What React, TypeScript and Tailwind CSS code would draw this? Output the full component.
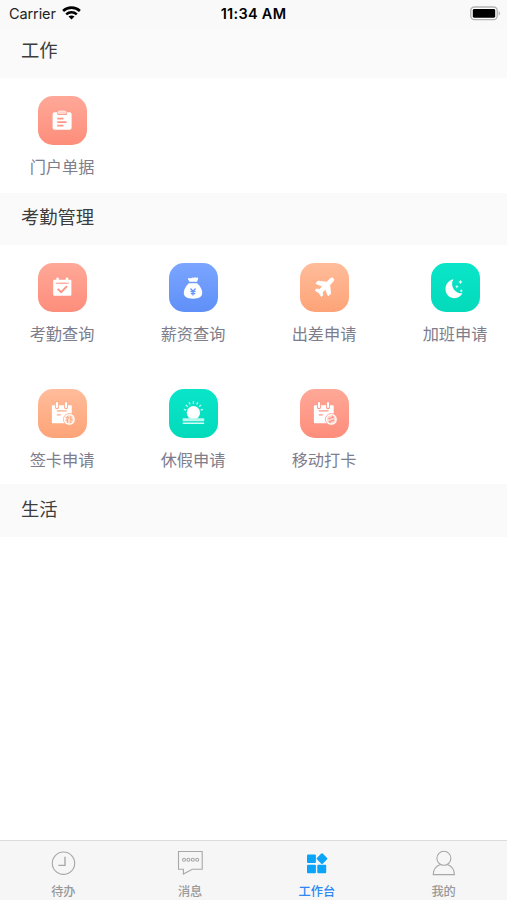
import type { ReactNode } from "react";

interface MenuItem {
  label: string;
  tile: string;
  icon: ReactNode;
}

interface Section {
  title: string;
  height: string;
  header: string;
  items: MenuItem[];
}

const coral = "from-[#ffa898] to-[#fd8d7b]";
const orange = "from-[#ffbc9a] to-[#fda378]";
const blue = "from-[#7ba5ff] to-[#5f8ff8]";
const green = "from-[#0ae5c9] to-[#03dabb]";

function ClipboardIcon() {
  return (
    <>
      <path
        fill="#fff"
        d="M16.6 16.2h2.6v1.7c0 .7.5 1.1 1.1 1.1h7.6c.6 0 1.1-.4 1.1-1.1v-1.7h2.6c1.1 0 2 .9 2 2v13.6c0 1.1-.9 2-2 2h-15c-1.1 0-2-.9-2-2V18.2c0-1.1.9-2 2-2z"
      />
      <path
        d="M20.3 17.2v-1.1c0-.6.4-1 1-1h5.6c.6 0 1 .4 1 1v1.1z"
        fill="#ffc4b8"
        stroke="#fff"
        strokeWidth="0.8"
      />
      <path
        d="M19.3 22.6h6.2M19.3 26.1h9.2M19.3 29.6h6.2"
        stroke="#fe9685"
        strokeWidth="1.8"
      />
    </>
  );
}

function CalendarCheckIcon() {
  return (
    <>
      <rect x="15.2" y="16.8" width="18.2" height="16" rx="1.2" fill="#fff" />
      <path d="M17.8 20.2h13" stroke="#fe9b8a" strokeWidth="1.2" />
      <path
        d="M19.6 15.8v2.6M29 15.8v2.6"
        stroke="#fff"
        strokeWidth="2.6"
        strokeLinecap="round"
      />
      <path
        d="M19.7 25.9l3.5 3.3 5.8-6"
        fill="none"
        stroke="#fe9483"
        strokeWidth="1.9"
      />
    </>
  );
}

function MoneyBagIcon() {
  return (
    <>
      <path
        fill="#fff"
        d="M20.4 18.8l-1.3-2.6c-.3-.8.3-1.4 1-1.2l1.9.5c.6-1 1.6-1.500 2.500-.5.9-1 2-1.100 2.700-.1.800-.800 2.300-.4 1.900.8L28 18.800z"
      />
      <path
        fill="#fff"
        d="M19.8 20.200h8.400c3.100 3 5 6.200 5 9.600 0 4.300-3.400 5.900-9.200 5.900s-9.200-1.600-9.200-5.900c0-3.400 1.900-6.600 5-9.600z"
      />
      <path
        d="M21.500 25.500l2.500 3 2.500-3M24 28.300v4.300M21.500 28.700h5M21.800 30.600h4.400"
        fill="none"
        stroke="#6794fa"
        strokeWidth="1.3"
      />
    </>
  );
}

function PlaneIcon() {
  return (
    <path
      fill="#fff"
      stroke="#fff"
      strokeWidth="0.900"
      strokeLinejoin="round"
      d="M33.200 15.500c.9.900.5 2.200-.5 3.300l-3 3.100.9 8.800-1.700 1.700c-.5.4-1 .2-1.200-.3l-2.200-6-3.100 3.100.3 3-1.300 1.300-2.400-3.700-3.800-2.400 1.300-1.300 3.100.3 3-3.100-6-2.400c-.5-.2-.6-.8-.2-1.200l1.600-1.500 8.700 1 3.200-3.200c1.100-1 2.400-1.400 3.300-.5z"
    />
  );
}

function MoonIcon() {
  return (
    <>
      <path
        fill="#fff"
        d="M22.400 16.200c-2 3.200-1.700 7.400.7 10.500 2.100 2.700 5.300 3.900 8.400 3.600-1.700 3-4.400 4.900-7.800 4.900-5.200 0-9.200-4-9.200-9.300 0-4.700 3.300-8.700 7.900-9.700z"
      />
      <path
        fill="#d8fff8"
        d="M29.500 16.800l.7 1.500 1.500.7-1.500.7-.7 1.500-.7-1.500-1.500-.7 1.500-.7zM25.900 21.900l.6 1.200 1.200.6-1.200.6-.6 1.200-.6-1.200-1.200-.6 1.200-.6zM30.300 26.200l.6 1.100 1.100.6-1.100.6-.6 1.100-.6-1.100-1.100-.6 1.100-.6z"
      />
    </>
  );
}

function CalendarCard({ color, children }: { color: string; children: ReactNode }) {
  return (
    <>
      <rect x="13.900" y="16.300" width="19.800" height="18" rx="1" fill="#fff" />
      {/* binding rings */}
      <path
        d="M19 14.200v4M28 14.200v4"
        stroke={color}
        strokeWidth="4"
        strokeLinecap="round"
      />
      <path
        d="M19 14.200v3.700M28 14.200v3.700"
        stroke="#fff"
        strokeWidth="2.300"
        strokeLinecap="round"
      />
      <path d="M18.800 21.800h9.800M18.800 25.800h4" stroke={color} strokeWidth="1.300" />
      <circle cx="31.300" cy="30.400" r="5.900" fill="#fff" stroke={color} strokeWidth="0.800" />
      {children}
    </>
  );
}

function CardSignIcon() {
  return (
    <CalendarCard color="#fdab83">
      <circle cx="31.300" cy="30.400" r="4.300" fill="#fee0d0" />
      <path
        d="M29.500 27v1M27.900 28.700h3l-3 3.200M29.600 30v4M32.800 27v7M32.900 29.800l1.700 1.300"
        fill="none"
        stroke="#fd9f72"
        strokeWidth="0.900"
      />
    </CalendarCard>
  );
}

function CardMobileIcon() {
  return (
    <CalendarCard color="#fe9786">
      <circle cx="31.300" cy="30.400" r="4.100" fill="#ffd5cd" />
      <path
        d="M28.500 29.800l4.600-1.600-.9-1.400M34.100 31l-4.600 1.600.9 1.400"
        fill="none"
        stroke="#fd8d7b"
        strokeWidth="1.100"
      />
    </CalendarCard>
  );
}

function SunriseIcon() {
  return (
    <>
      <path
        d="M24.400 12.200v2.700M20 13.200l1.100 2.400M28.800 13.200l-1.100 2.400M16.800 16l2 1.800M32 16l-2 1.800M14.800 20.300l2.400.9M34 20.300l-2.400.9"
        stroke="#b5fff4"
        strokeWidth="1.300"
      />
      <circle cx="24.400" cy="23.800" r="6.700" fill="#fff" />
      <rect x="13.600" y="29.300" width="21.600" height="2.900" rx="0.600" fill="#b9f8ee" />
      <rect x="13.600" y="33.600" width="21.600" height="1.500" rx="0.500" fill="#d4fbf5" />
    </>
  );
}

const sections: Section[] = [
  {
    title: "工作",
    height: "h-[115px]",
    header: "h-[50px] pb-1",
    items: [{ label: "门户单据", tile: coral, icon: <ClipboardIcon /> }],
  },
  {
    title: "考勤管理",
    height: "h-[239px]",
    header: "h-[52px] pb-[2px]",
    items: [
      { label: "考勤查询", tile: coral, icon: <CalendarCheckIcon /> },
      { label: "薪资查询", tile: blue, icon: <MoneyBagIcon /> },
      { label: "出差申请", tile: orange, icon: <PlaneIcon /> },
      { label: "加班申请", tile: green, icon: <MoonIcon /> },
      { label: "签卡申请", tile: orange, icon: <CardSignIcon /> },
      { label: "休假申请", tile: green, icon: <SunriseIcon /> },
      { label: "移动打卡", tile: coral, icon: <CardMobileIcon /> },
    ],
  },
  {
    title: "生活",
    height: "h-0",
    header: "h-[53px] pb-[2px]",
    items: [],
  },
];

const tabs = [
  {
    label: "待办",
    icon: (
      <g fill="none" stroke="#a8a8a8" strokeWidth="1.1">
        <circle cx="14.5" cy="14.2" r="11.2" />
        <path d="M16 7.700v8.700H9.300" strokeWidth="1.400" />
      </g>
    ),
  },
  {
    label: "消息",
    icon: (
      <g fill="none" stroke="#a8a8a8" strokeWidth="1.1">
        <path d="M2.500 2.500h23.700v17.800H16.300L7.400 25v-4.700H2.500z" />
        <circle cx="8" cy="10.700" r="1.500" />
        <circle cx="12.400" cy="10.700" r="1.500" />
        <circle cx="16.800" cy="10.700" r="1.500" />
        <circle cx="21.200" cy="10.700" r="1.500" />
      </g>
    ),
  },
  {
    label: "工作台",
    active: true,
    icon: (
      <g fill="#0aa5f8">
        <rect x="4" y="5.600" width="8.900" height="8.500" rx="1" />
        <rect x="4" y="15.800" width="8.900" height="8.500" rx="1" />
        <rect x="14.300" y="15.800" width="8.900" height="8.500" rx="1" />
        <rect
          x="14.900"
          y="5.500"
          width="8.200"
          height="8.200"
          rx="1"
          transform="rotate(45 19 9.600)"
        />
      </g>
    ),
  },
  {
    label: "我的",
    icon: (
      <g fill="none" stroke="#a8a8a8" strokeWidth="1.1">
        <circle cx="13.900" cy="9.300" r="7" />
        <path d="M10.400 15.600c-4.300 1.500-7 4.900-7.200 10h21.200c-.2-5.100-2.800-8.500-7.100-10" />
      </g>
    ),
  },
];

function StatusBar() {
  return (
    <div className="grid h-7 grid-cols-3 items-center bg-[#f9f9f9] pl-[6px] pr-[6px] font-['Inter','Liberation_Sans',sans-serif] text-black">
      <div className="flex items-center gap-[6px] pl-[3px]">
        <span className="text-[14.500px] tracking-[-0.1px] text-[#222]">Carrier</span>
        <svg width="19" height="14" viewBox="0 0 19 14" className="mb-[2px]">
          <g fill="none" stroke="#000" strokeWidth="2.600">
            <path d="M1.100 5C5.700.5 13.300.5 17.900 5" />
            <path d="M4.200 8.400c3-2.800 7.600-2.800 10.600 0" />
          </g>
          <path d="M6.500 10.600c1.700-1.500 4.300-1.500 6 0l-3 3z" />
        </svg>
      </div>
      <span className="pb-px text-center text-[14.500px] font-semibold tracking-[0.300px]">
        11:34 AM
      </span>
      <svg width="31" height="15" viewBox="0 0 31 15" className="mb-[2px] justify-self-end">
        <rect x="0.800" y="1" width="26.400" height="12.600" rx="3.500" fill="#fff" stroke="#b3b3b3" strokeWidth="1.400" />
        <rect x="2.800" y="3" width="22.400" height="8.700" rx="1.400" />
        <path d="M28.700 5.200c1.500.5 1.500 3.700 0 4.200z" fill="#a8a8a8" />
      </svg>
    </div>
  );
}

export default function App() {
  return (
    <div className="flex h-[900px] w-[507px] flex-col overflow-hidden bg-white font-['Liberation_Sans','Noto_Sans_CJK_SC',sans-serif]">
      <StatusBar />

      {/* Sections */}
      <main className="flex-1">
        {sections.map((section) => (
          <section key={section.title}>
            <h2
              className={`${section.header} flex items-center bg-[#fafafa] pl-[21px] text-[18.300px] text-[#3c3c3c]`}
            >
              {section.title}
            </h2>
            <div
              className={`${section.height} grid grid-cols-[repeat(4,84px)] content-start gap-x-[47px] gap-y-[45px] pl-5`}
            >
              {section.items.map((item) => (
                <div key={item.label} className="-mb-[18px] flex flex-col items-center pt-[18px]">
                  <div
                    className={`${item.tile} h-[49px] w-[49px] rounded-[15px] bg-linear-to-b`}
                  >
                    <svg width="49" height="49" viewBox="0 0 49 49">
                      {item.icon}
                    </svg>
                  </div>
                  <span className="mt-3 h-5 text-[16.200px] leading-5 whitespace-nowrap text-[#7d7d8c]">
                    {item.label}
                  </span>
                </div>
              ))}
            </div>
          </section>
        ))}
      </main>

      {/* Tab bar */}
      <nav className="grid h-[60px] grid-cols-4 border-t border-[#dcdcdc] bg-[#f6f6f6]">
        {tabs.map((tab) => (
          <div key={tab.label} className="flex flex-col items-center pt-2">
            <svg width="28" height="28" viewBox="0 0 28 28">
              {tab.icon}
            </svg>
            <span
              className={`mt-[7px] text-[12.200px] leading-4 font-medium ${
                tab.active ? "text-[#2d87f5]" : "text-[#999]"
              }`}
            >
              {tab.label}
            </span>
          </div>
        ))}
      </nav>
    </div>
  );
}
